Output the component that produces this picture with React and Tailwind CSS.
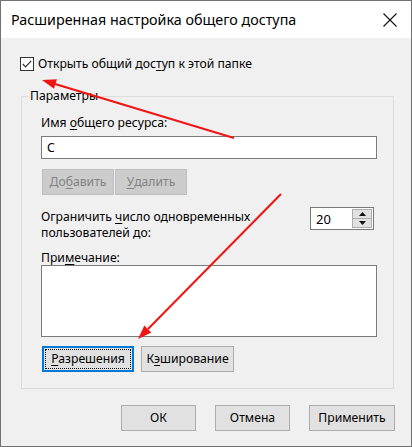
import React from "react";

function Btn({ children, className = "", disabled = false }) {
  return (
    <button
      disabled={disabled}
      className={
        "h-[26px] flex items-center justify-center border " +
        (disabled
          ? "bg-[#cccccc] border-[#bfbfbf] text-[#838383] "
          : "bg-[#e1e1e1] border-[#adadad] text-black ") +
        className
      }
    >
      {children}
    </button>
  );
}

function Arrows() {
  return (
    <svg
      className="absolute inset-0 pointer-events-none"
      width="412"
      height="447"
      viewBox="0 0 412 447"
    >
      <line x1="233" y1="137" x2="54" y2="83" stroke="#f11414" strokeWidth="2" />
      <polygon points="41,79 55.9,78.3 53,87.8" fill="#f11414" />
      <line x1="280" y1="193" x2="147" y2="328" stroke="#f11414" strokeWidth="2" />
      <polygon points="137,338 150.4,331.5 143.3,324.5" fill="#f11414" />
    </svg>
  );
}

export default function App() {
  return (
    <div
      className="relative w-[412px] h-[447px] border border-[#717171] bg-[#f0f0f0] text-black text-[12.2px] leading-[16px] overflow-hidden"
      style={{ fontFamily: '"Noto Sans", "Open Sans", sans-serif' }}
    >
      {/* title bar */}
      <div className="h-[37px] bg-white flex items-center justify-between pl-[10px] pr-[14px]">
        <span className="text-[14.3px]">Расширенная настройка общего доступа</span>
        <svg width="14" height="14" viewBox="0 0 14 14">
          <path d="M0.5 0.5 L13.5 13.5 M13.5 0.5 L0.5 13.5" stroke="#111" strokeWidth="1.1" />
        </svg>
      </div>

      <div className="pl-[19px] pr-[17px] pt-[19px]">
        {/* share checkbox */}
        <label className="flex items-center gap-[4px] h-[14px]">
          <span className="w-[14px] h-[14px] border border-[#333] bg-white flex items-center justify-center">
            <svg width="10" height="8" viewBox="0 0 10 8">
              <path d="M0.8 4 L3.6 6.8 L9.2 0.8" fill="none" stroke="#333" strokeWidth="1.2" />
            </svg>
          </span>
          <span>
            Открыть общий дос<u className="underline-offset-2">т</u>уп к этой папке
          </span>
        </label>

        {/* group box */}
        <div className="mt-[25px] ml-[1px] h-[293px] border border-[#dcdcdc] pl-[19px] pr-[16px] flex flex-col">
          <div className="-mt-[9px] -ml-[12px] px-[1px] w-fit h-[16px] bg-[#f0f0f0]">Параметры</div>

          <div className="mt-[11px] h-[16px]">
            Имя <u className="underline-offset-2">о</u>бщего ресурса:
          </div>
          <div className="mt-[5px] w-[336px] h-[23px] border border-[#7a7a7a] bg-white flex items-center pl-[5px]">
            С
          </div>

          <div className="mt-[10px] ml-[1px] flex gap-[1px]">
            <Btn disabled className="w-[72px] h-[25px]">
              До<u className="underline-offset-2">б</u>авить
            </Btn>
            <Btn disabled className="w-[72px] h-[25px]">
              <u className="underline-offset-2">У</u>далить
            </Btn>
          </div>

          <div className="mt-[14px] flex justify-between items-start w-[336px]">
            <div className="leading-[16px]">
              Ограничить <u className="underline-offset-2">ч</u>исло одновременных
              <br />
              пользователей до:
            </div>
            <div className="-mt-[2px] mr-[3px] flex h-[23px] w-[64px] border border-[#7a7a7a] bg-white">
              <div className="flex-1 flex items-center pl-[5px] text-[13px]">20</div>
              <div className="w-[20px] my-[1px] mr-[1px] border border-[#adadad] bg-[#e1e1e1] flex flex-col">
                <div className="flex-1 flex items-center justify-center border-b border-[#adadad]">
                  <svg width="7" height="4" viewBox="0 0 7 4">
                    <path d="M3.5 0 L7 4 L0 4 Z" fill="#111" />
                  </svg>
                </div>
                <div className="flex-1 flex items-center justify-center">
                  <svg width="7" height="4" viewBox="0 0 7 4">
                    <path d="M0 0 L7 0 L3.5 4 Z" fill="#111" />
                  </svg>
                </div>
              </div>
            </div>
          </div>

          <div className="mt-[10px] h-[14px] flex items-center">
            При<u className="underline-offset-2">м</u>ечание:
          </div>
          <div className="w-[336px] h-[72px] border border-[#7a7a7a] bg-white" />

          <div className="mt-[9px] ml-[1px] flex gap-[7px]">
            <button className="w-[92px] h-[26px] border-2 border-[#0078d7] bg-[#e1e1e1] p-[1px]">
              <span className="w-full h-full flex items-center justify-center border border-dotted border-black">
                <span>
                  <u className="underline-offset-2">Р</u>азрешения
                </span>
              </span>
            </button>
            <Btn className="w-[93px]">
              К<u className="underline-offset-2">э</u>ширование
            </Btn>
          </div>
        </div>

        {/* dialog buttons */}
        <div className="mt-[16px] flex justify-end gap-[19px] ml-[1px] w-[374px]">
          <Btn className="w-[75px]">ОК</Btn>
          <Btn className="w-[75px]">Отмена</Btn>
          <Btn className="w-[86px]">Применить</Btn>
        </div>
      </div>

      <Arrows />
    </div>
  );
}
